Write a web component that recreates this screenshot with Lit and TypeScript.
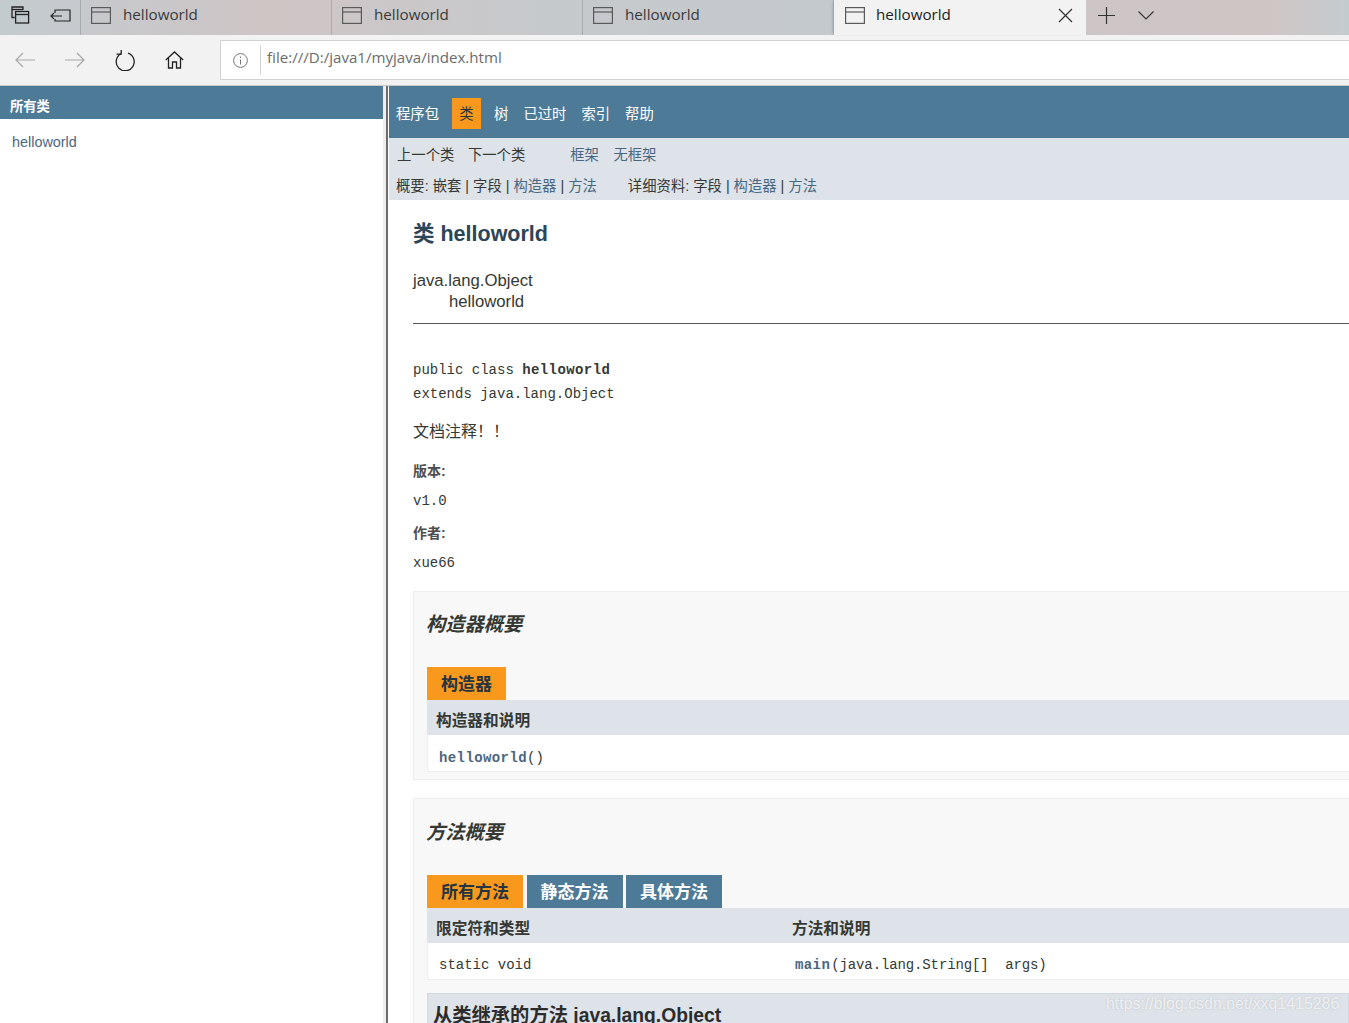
import { LitElement, html, css, svg } from "lit";
import { customElement } from "lit/decorators.js";

const tabIcon = svg`<svg class="ti" width="20" height="17" viewBox="0 0 20 17" fill="none" stroke="#5a5a5a" stroke-width="1.2"><rect x=".6" y=".6" width="18.8" height="15.8"/><path d="M.6 5h18.8"/></svg>`;

@customElement("app-root")
export class AppRoot extends LitElement {
  static styles = css`
    :host { display: block; width: 1349px; height: 1023px; overflow: hidden; position: relative; background: #fff;
      font-family: "Liberation Sans", "Noto Sans CJK SC", sans-serif; font-size: 14.35px; color: #353833; }
    a { color: #4A6782; text-decoration: none; }
    .tabbar { display: flex; height: 35px; background: linear-gradient(90deg, #c3cbcf 0, #cbc6c8 15%, #cfc5c5 20%, #c6c9cc 40%, #c4c9cd 62%, #cdc5c6 82%, #d0c5c5 94%, #c4cbcf 100%); }
    .sys { width: 81px; display: flex; align-items: center; gap: 20px; padding: 0 0 4px 11px; box-sizing: border-box; border-right: 1px solid #a9acae; }
    .tab { width: 251px; display: flex; align-items: center; padding: 0 0 4px 10px; box-sizing: border-box; border-right: 1px solid #a9acae;
      font-family: "Open Sans", "Noto Sans", sans-serif; font-size: 15.2px; color: #3a3a3a; flex: none; gap: 12px; }
    .tab .name { margin-top: -3px; }
    .tab.active { width: 252px; background: #f2f2f2; color: #222; border-right: none; padding-left: 11px; gap: 11px; box-shadow: -3px 0 3px -2px #9ba1a5; }
    .tab .spacer { flex: 1; }
    .tab .close { margin-right: 13px; display: block; }
    .ctrl { display: flex; align-items: center; gap: 23px; padding: 0 0 4px 12px; }
    .toolbar { height: 51px; box-sizing: border-box; background: #f2f2f2; display: flex; align-items: center; border-bottom: 1px solid #c9c9c9; }
    .nav { width: 220px; flex: none; display: flex; align-items: center; gap: 30px; padding-left: 15px; box-sizing: border-box; }
    .addr { flex: 1; height: 40px; background: #fff; border: 1px solid #d2d2d2; border-right: none; display: flex; align-items: center; box-sizing: border-box; }
    .info { width: 39px; display: flex; justify-content: center; flex: none; }
    .addr .url { border-left: 1px solid #d2d2d2; height: 30px; line-height: 24px; padding-left: 6px;
      font-family: "Open Sans", "Noto Sans", sans-serif; font-size: 15.1px; color: #6b6b6b; }
    .frames { display: flex; height: 937px; overflow: hidden; }
    .left { width: 383px; flex: none; }
    .left .head { height: 33px; background: #4D7A97; color: #fff; font-weight: bold; font-size: 13.3px; line-height: 41px; padding-left: 10px; box-sizing: border-box; }
    .left .item { margin: 15px 0 0 12px; font-size: 14.4px; line-height: 17px; }
    .divider { width: 3px; background: #ededed; flex: none; }
    .bar { width: 2px; background: #6d6d6d; flex: none; margin-right: 1px; }
    .right { flex: 1; min-width: 0; overflow: hidden; }
    .top { height: 52px; background: #4D7A97; display: flex; align-items: flex-end; padding: 0 0 9px 7px; box-sizing: border-box; color: #fff; gap: 15px; }
    .top span { line-height: 29px; padding-top: 2px; }
    .top .cur { background: #F8981D; color: #253441; width: 29px; text-align: center; margin: 0 -2px; }
    .sub { height: 62px; background: #dee3e9; box-sizing: border-box; padding: 9px 0 0 8px; }
    .sub1 { display: flex; line-height: 17px; height: 17px; }
    .sub2 { display: flex; line-height: 17px; margin-top: 14px; margin-left: -1px; }
    .m13 { margin-left: 13.5px; }
    .m14 { margin-left: 14.5px; }
    .m44 { margin-left: 45px; }
    .m30 { margin-left: 31px; }
    .body { padding: 0 0 0 24px; }
    h2 { margin: 20px 0 0; font-size: 21.5px; line-height: 29px; color: #2c4557; font-weight: bold; }
    .inh { margin-top: 21px; font-size: 16.7px; line-height: 21px; }
    .inh div + div { padding-left: 36px; }
    hr { border: 0; height: 1px; background: #555; margin: 11px 0 0; }
    .mono { font-family: "Liberation Mono", "Noto Sans CJK SC", monospace; font-size: 14px; white-space: pre; }
    .sig { margin-top: 34px; line-height: 24px; }
    .sig b { color: #353833; letter-spacing: .4px; }
    .doc { font-family: "Liberation Mono", "Noto Sans CJK SC", monospace; font-size: 16px; line-height: 24px; margin-top: 15px; }
    .lab { font-size: 14px; font-weight: bold; line-height: 16px; color: #4E4E4E; }
    .lab.a { margin-top: 18px; }
    .lab.b { margin-top: 14px; }
    .val { line-height: 20px; margin-top: 12px; }
    .box { border: 1px solid #ededed; background: #f8f8f8; padding: 0 0 7px 13px; border-right: none; }
    .box.c { margin-top: 18px; height: 189px; box-sizing: border-box; }
    .box.d { margin-top: 18px; }
    h3 { margin: 0 0 0 -1px; font-size: 19.3px; font-style: italic; font-weight: bold; color: #353833; line-height: 28px; }
    .box.c h3 { padding-top: 19px; }
    .box.d h3 { padding-top: 20px; }
    .tabs { display: flex; gap: 3.5px; height: 33px; }
    .box.c .tabs { margin-top: 28px; }
    .box.d .tabs { margin-top: 28px; }
    .tabs span { background: #4D7A97; color: #fff; font-weight: bold; font-size: 17px; line-height: 35px; padding: 0 14px; }
    .tabs span.on { background: #F8981D; color: #253441; }
    .th { height: 35px; background: #dee3e9; display: flex; font-weight: bold; font-size: 15.7px; line-height: 41px; padding-left: 9px; color: #353833; }
    .th .c1 { width: 356px; }
    .tr { height: 37px; background: #fff; display: flex; align-items: center; padding: 10px 0 0 11px; border-bottom: 1px solid #eee; border-left: 1px solid #eee; box-sizing: border-box; }
    .box.d .tr { padding-top: 8px; }
    .tr .c1 { width: 356px; }
    .tr b { color: #4A6782; letter-spacing: .4px; }
    .tight { letter-spacing: -.12px; margin-left: 1px; }
    .inherit { margin: 13px 0 0 0; height: 60px; background: #dee3e9; border: 1px solid #d0d9e0; padding: 8px 0 0 5px; font-size: 19.3px; font-weight: bold; line-height: 28px; color: #2c2c2c; }
    .wm { position: absolute; left: 1106px; top: 993px; font-size: 15.9px; line-height: 22px; color: rgba(255,255,255,.7); text-shadow: 0 0 2px rgba(130,130,130,.35); }
  `;

  render() {
    return html`
      <div class="tabbar">
        <div class="sys">
          <svg width="19" height="19" viewBox="0 0 19 19" fill="none" stroke="#222" stroke-width="1.3"><path d="M3.6 11.5H1V1h11v3"/><path d="M1 3.5h11"/><rect x="4.6" y="5.5" width="13" height="11.5"/><path d="M4.6 8.5h13"/></svg>
          <svg width="21" height="15" viewBox="0 0 21 15" fill="none" stroke="#222" stroke-width="1.2"><path d="M5 5V2h15v11H5v-2"/><path d="M1 8h11M4 5 1 8l3 3"/></svg>
        </div>
        ${["1", "2", "3"].map(() => html`<div class="tab">${tabIcon}<span class="name">helloworld</span></div>`)}
        <div class="tab active">${tabIcon}<span class="name">helloworld</span><span class="spacer"></span>
          <svg class="close" width="15" height="15" viewBox="0 0 15 15" stroke="#333" stroke-width="1.2"><path d="M1 1l13 13M14 1 1 14"/></svg>
        </div>
        <div class="ctrl">
          <svg width="17" height="17" viewBox="0 0 17 17" stroke="#333" stroke-width="1.2"><path d="M0 8.5h17M8.5 0v17"/></svg>
          <svg width="16" height="9" viewBox="0 0 16 9" fill="none" stroke="#333" stroke-width="1.1"><path d="M.5.5 8 8 15.5.5"/></svg>
        </div>
      </div>
      <div class="toolbar">
        <div class="nav">
          <svg width="20" height="16" viewBox="0 0 20 16" fill="none" stroke="#a8a8a8" stroke-width="1.2"><path d="M20 8H1M8 1 1 8l7 7"/></svg>
          <svg width="20" height="16" viewBox="0 0 20 16" fill="none" stroke="#a8a8a8" stroke-width="1.2"><path d="M0 8h19M12 1l7 7-7 7"/></svg>
          <svg width="20" height="21" viewBox="0 0 20 21" fill="none" stroke="#222" stroke-width="1.3"><path d="M6 3.8A9 9 0 1 0 13 3.2"/><path d="M6.2 0v4.2H1.6"/></svg>
          <svg width="19" height="18" viewBox="0 0 19 18" fill="none" stroke="#222" stroke-width="1.3"><path d="M.8 9 9.5 1l8.7 8"/><path d="M3.5 7v10h4v-6h4v6h4V7"/></svg>
        </div>
        <div class="addr">
          <div class="info"><svg width="15" height="15" viewBox="0 0 15 15" fill="none" stroke="#777"><circle cx="7.5" cy="7.5" r="6.9"/><path d="M7.5 6.5v5M7.5 3.5v1.5"/></svg></div>
          <div class="url">file:///D:/java1/myjava/index.html</div>
        </div>
      </div>
      <div class="frames">
        <div class="left">
          <div class="head">所有类</div>
          <div class="item"><a>helloworld</a></div>
        </div>
        <div class="divider"></div>
        <div class="bar"></div>
        <div class="right">
          <div class="top">
            <span>程序包</span><span class="cur">类</span><span>树</span><span>已过时</span><span>索引</span><span>帮助</span>
          </div>
          <div class="sub">
            <div class="sub1"><span>上一个类</span><span class="m13">下一个类</span><a class="m44">框架</a><a class="m14">无框架</a></div>
            <div class="sub2"><span>概要: 嵌套 | 字段 | <a>构造器</a> | <a>方法</a></span><span class="m30">详细资料: 字段 | <a>构造器</a> | <a>方法</a></span></div>
          </div>
          <div class="body">
            <h2>类 helloworld</h2>
            <div class="inh"><div>java.lang.Object</div><div>helloworld</div></div>
            <hr />
            <div class="mono sig">public class <b>helloworld</b><br />extends java.lang.Object</div>
            <div class="doc">文档注释！！</div>
            <div class="lab a">版本:</div>
            <div class="mono val">v1.0</div>
            <div class="lab b">作者:</div>
            <div class="mono val">xue66</div>
            <div class="box c">
              <h3>构造器概要</h3>
              <div class="tabs"><span class="on">构造器</span></div>
              <div class="th">构造器和说明</div>
              <div class="tr mono"><span><b>helloworld</b>()</span></div>
            </div>
            <div class="box d">
              <h3>方法概要</h3>
              <div class="tabs"><span class="on">所有方法</span><span>静态方法</span><span>具体方法</span></div>
              <div class="th"><div class="c1">限定符和类型</div><div>方法和说明</div></div>
              <div class="tr mono"><div class="c1">static void</div><div><b>main</b><span class="tight">(java.lang.String[]  args)</span></div></div>
              <div class="inherit">从类继承的方法 java.lang.Object</div>
            </div>
          </div>
        </div>
      </div>
      <div class="wm">https://blog.csdn.net/xxq1415286</div>
    `;
  }
}
